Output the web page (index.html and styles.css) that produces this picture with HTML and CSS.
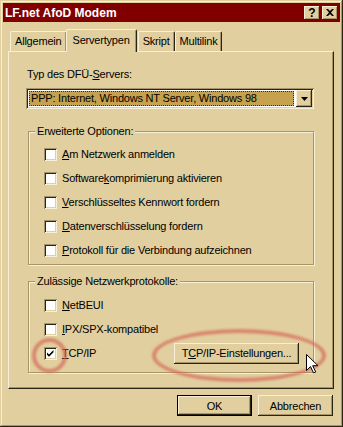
FILE: index.html
```html
<!DOCTYPE html>
<html lang="de">

<head>
  <meta charset="UTF-8">
  <meta name="viewport" content="width=device-width, initial-scale=1.0">
  <title>LF.net AfoD Modem</title>
  <link rel="stylesheet" href="styles.css">
</head>

<body>
  <div class="window">
    <div class="titlebar">
      <span class="title">LF.net AfoD Modem</span>
      <div class="title-buttons">
        <span class="tbtn tbtn--help">?</span>
        <span class="tbtn">
          <svg width="8" height="7" viewBox="0 0 8 7">
            <path d="M0 0h2l2 2 2-2h2L5 3.5 8 7H6L4 5 2 7H0l3-3.5z" fill="#000" />
          </svg>
        </span>
      </div>
    </div>

    <div class="content">
      <!-- ============= Reiter ============= -->
      <div class="tabs">
        <div class="tab">Allgemein</div>
        <div class="tab tab--active">Servertypen</div>
        <div class="tab">Skript</div>
        <div class="tab">Multilink</div>
      </div>

      <div class="panel">
        <div class="label">Typ des DFÜ-<u>S</u>ervers:</div>
        <div class="combo">
          <div class="combo__value"><span>PPP: Internet, Windows NT Server, Windows 98</span></div>
          <div class="combo__arrow">
            <svg width="7" height="4" viewBox="0 0 7 4">
              <path d="M0 0h7L3.5 4z" fill="#000" />
            </svg>
          </div>
        </div>

        <!-- ============= Optionen ============= -->
        <fieldset class="group group--options">
          <legend>Erweiterte Optionen:</legend>
          <div class="row"><span class="box"></span><span><u>A</u>m Netzwerk anmelden</span></div>
          <div class="row"><span class="box"></span><span>Software<u>k</u>omprimierung aktivieren</span></div>
          <div class="row"><span class="box"></span><span><u>V</u>erschlüsseltes Kennwort fordern</span></div>
          <div class="row"><span class="box"></span><span><u>D</u>atenverschlüsselung fordern</span></div>
          <div class="row"><span class="box"></span><span><u>P</u>rotokoll für die Verbindung aufzeichnen</span></div>
        </fieldset>

        <fieldset class="group group--protocols">
          <legend>Zulässige Netzwerkprotokolle:</legend>
          <div class="row"><span class="box"></span><span><u>N</u>etBEUI</span></div>
          <div class="row"><span class="box"></span><span><u>I</u>PX/SPX-kompatibel</span></div>
          <div class="row">
            <span class="box">
              <svg width="9" height="9" viewBox="0 0 9 9">
                <path d="M1 3.5l2 2 4.5-4.5v2.2L3 7.7 1 5.7z" fill="#000" />
              </svg>
            </span>
            <span><u>T</u>CP/IP</span>
            <button class="btn btn--settings">T<u>C</u>P/IP-Einstellungen...</button>
          </div>
        </fieldset>
      </div>

      <div class="footer">
        <button class="btn btn--default">OK</button>
        <button class="btn">Abbrechen</button>
      </div>
    </div>

    <!-- Markierungen und Mauszeiger -->
    <div class="mark mark--check"></div>
    <div class="mark mark--button"></div>
    <svg class="cursor" width="12" height="20" viewBox="0 0 12 20">
      <path d="M0.5 0.5v16l4-4 3 6.5 2.2-1-3-6.3h5.3z" fill="#fff" stroke="#000" stroke-width="1" />
    </svg>
  </div>
</body>

</html>
```

FILE: styles.css
```css
* {
  margin: 0;
  padding: 0;
  box-sizing: border-box;
}

body {
  background: #e1cf9f;
  font-family: "Liberation Sans", Arial, sans-serif;
  font-size: 11px;
  letter-spacing: -0.2px;
  color: #000;
  overflow: hidden;
}

/* ============= Fenster ============= */
.window {
  position: relative;
  width: 343px;
  height: 427px;
  padding: 3px;
  background: #e1cf9f;
  box-shadow: inset -1px -1px 0 #2a2414, inset 1px 1px 0 #e1cf9f,
    inset -2px -2px 0 #a8956a, inset 2px 2px 0 #f7efd6;
}

.titlebar {
  height: 19px;
  display: flex;
  justify-content: space-between;
  align-items: center;
  padding: 0 2px 0 2px;
  background: #800000;
}

.title {
  color: #fff;
  font-size: 12px;
  font-weight: 700;
  letter-spacing: 0;
}

.title-buttons {
  display: flex;
  gap: 2px;
}

.tbtn {
  width: 16px;
  height: 14px;
  display: flex;
  justify-content: center;
  align-items: center;
  background: #e1cf9f;
  font-size: 12px;
  font-weight: 700;
  letter-spacing: 0;
  box-shadow: inset -1px -1px 0 #2a2414, inset 1px 1px 0 #f7efd6,
    inset -2px -2px 0 #a8956a;
}

/* ============= Reiter ============= */
.content {
  padding: 7px 6px 0 5px;
}

.tabs {
  display: flex;
  align-items: flex-end;
  padding-left: 2px;
}

.tab {
  height: 20px;
  padding: 0 4px;
  line-height: 18px;
  border-left: 1px solid #f7efd6;
  border-top: 1px solid #f7efd6;
  border-right: 1px solid #2a2414;
  border-radius: 2px 2px 0 0;
  box-shadow: inset -1px 0 0 #a8956a;
  background: #e1cf9f;
}

.tab--active {
  position: relative;
  z-index: 1;
  height: 23px;
  margin: 0 -1px -1px;
  padding: 0 6px;
  line-height: 20px;
}

.tab--active + .tab {
  margin-left: 2px;
}

.panel {
  height: 338px;
  padding: 16px 0 0 17px;
  border-left: 1px solid #f7efd6;
  border-top: 1px solid #f7efd6;
  border-right: 1px solid #2a2414;
  border-bottom: 1px solid #2a2414;
  box-shadow: inset -1px -1px 0 #a8956a;
}

.label {
  line-height: 13px;
  margin-left: 1px;
}

/* ============= Auswahlfeld ============= */
.combo {
  width: 288px;
  height: 21px;
  margin-top: 7px;
  padding: 2px;
  display: flex;
  background: #fff;
  box-shadow: inset 1px 1px 0 #a8956a, inset -1px -1px 0 #f7efd6,
    inset 2px 2px 0 #2a2414, inset -2px -2px 0 #e1cf9f;
}

.combo__value {
  flex: 1;
  margin: 1px 2px 1px 1px;
  padding-left: 2px;
  line-height: 15px;
  background: #c6a24e;
  outline: 1px dotted #3a3020;
  outline-offset: -1px;
}

.combo__arrow {
  width: 16px;
  display: flex;
  justify-content: center;
  align-items: center;
  background: #e1cf9f;
  box-shadow: inset -1px -1px 0 #2a2414, inset 1px 1px 0 #f7efd6,
    inset -2px -2px 0 #a8956a;
}

/* ============= Gruppen ============= */
.group {
  width: 286px;
  margin-left: 2px;
  padding: 4px 14px 2px 15px;
  border: 1px solid #a8956a;
  box-shadow: 1px 1px 0 #f7efd6, inset 1px 1px 0 #f7efd6;
}

.group legend {
  margin-left: -9px;
  padding: 0 2px;
  line-height: 13px;
  background: #e1cf9f;
}

.group--options {
  margin-top: 16px;
}

.group--protocols {
  margin-top: 10px;
  padding-top: 5px;
  padding-bottom: 7px;
}

.row {
  height: 24px;
  display: flex;
  align-items: center;
  gap: 5px;
}

.box {
  width: 13px;
  height: 13px;
  display: flex;
  justify-content: center;
  align-items: center;
  background: #fff;
  box-shadow: inset 1px 1px 0 #a8956a, inset -1px -1px 0 #f7efd6,
    inset 2px 2px 0 #2a2414, inset -2px -2px 0 #e1cf9f;
}

/* ============= Schaltflächen ============= */
.btn {
  width: 75px;
  height: 21px;
  border: none;
  background: #e1cf9f;
  font-family: "Liberation Sans", Arial, sans-serif;
  font-size: 11px;
  letter-spacing: -0.2px;
  color: #000;
  box-shadow: inset -1px -1px 0 #2a2414, inset 1px 1px 0 #f7efd6,
    inset -2px -2px 0 #a8956a;
}

.btn--default {
  border: 1px solid #000;
}

.btn--settings {
  width: 125px;
  margin-left: auto;
}

.footer {
  display: flex;
  justify-content: flex-end;
  gap: 6px;
  margin-top: 6px;
  padding-right: 1px;
}

/* ============= Markierungen ============= */
.mark {
  position: absolute;
  border: 4px solid rgba(214, 104, 88, 0.7);
  border-radius: 50%;
  filter: blur(1.2px);
}

.mark--check {
  left: 32px;
  top: 338px;
  width: 35px;
  height: 35px;
}

.mark--button {
  left: 152px;
  top: 329px;
  width: 174px;
  height: 53px;
}

.cursor {
  position: absolute;
  left: 306px;
  top: 354px;
}
```
